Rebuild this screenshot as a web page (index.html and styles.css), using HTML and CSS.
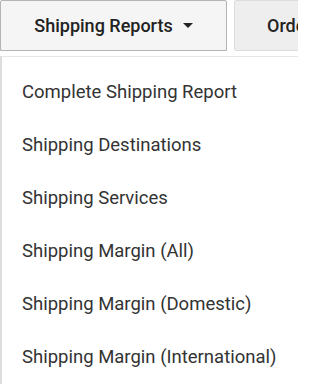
FILE: index.html
```html
<!DOCTYPE html>
<html>
<head>
<meta charset="utf-8">
<link rel="stylesheet" href="styles.css">
</head>
<body>
<div class="page">
  <div class="tabs">
    <button class="btn btn-active">Shipping Reports <span class="caret"></span></button>
    <button class="btn btn-other">Orders</button>
  </div>
  <ul class="menu">
    <li>Complete Shipping Report</li>
    <li>Shipping Destinations</li>
    <li>Shipping Services</li>
    <li>Shipping Margin (All)</li>
    <li>Shipping Margin (Domestic)</li>
    <li>Shipping Margin (International)</li>
  </ul>
</div>
</body>
</html>
```
FILE: styles.css
```css
html, body {
  margin: 0;
  padding: 0;
  background: #ffffff;
  overflow: hidden;
  width: 298px;
  height: 386px;
}
.page {
  width: 298px;
  height: 386px;
  overflow: hidden;
  font-family: Roboto, "Liberation Sans", sans-serif;
}
.tabs {
  display: flex;
  gap: 7px;
  width: 298px;
  overflow: hidden;
}
.btn {
  flex: none;
  height: 51px;
  box-sizing: border-box;
  font-family: Roboto, "Liberation Sans", sans-serif;
  font-size: 18px;
  font-weight: 500;
  color: #222222;
  display: flex;
  align-items: center;
  justify-content: center;
  gap: 10px;
  padding: 0;
  border-radius: 2px;
}
.btn-active {
  width: 227px;
  background: #f5f5f5;
  border: 1px solid #b4b4b4;
  box-shadow: 0 1px 0 #c8c8c8;
}
.btn-other {
  width: 100px;
  background: #eeeeee;
  border: 1px solid #dcdcdc;
  justify-content: flex-start;
  padding-left: 32px;
}
.caret {
  width: 0;
  height: 0;
  border-left: 5px solid transparent;
  border-right: 5px solid transparent;
  border-top: 5px solid #222222;
}
.menu {
  list-style: none;
  margin: 5px 0 0 0;
  padding: 9px 0 0 0;
  box-sizing: border-box;
  width: 298px;
  border-left: 2px solid #dddddd;
  border-top: 1px solid #e6e6e6;
  background: #ffffff;
}
.menu li {
  height: 53px;
  line-height: 53px;
  padding-left: 20px;
  font-size: 18.5px;
  color: #333333;
  white-space: nowrap;
}
```
